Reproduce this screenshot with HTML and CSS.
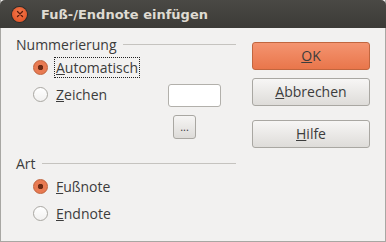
FILE: index.html
```html
<!DOCTYPE html>
<html lang="de">
<head>
<meta charset="UTF-8">
<title>Fuß-/Endnote einfügen</title>
<link rel="stylesheet" href="styles.css">
</head>
<body>
  <!-- Fenster -->
  <div class="fenster">
    <div class="titelleiste">
      <span class="schliessen">
        <svg width="8" height="8" viewBox="0 0 8 8"><path d="M1.5 1.5 L6.5 6.5 M6.5 1.5 L1.5 6.5" stroke="#5a1a0a" stroke-width="1.3" stroke-linecap="round"/></svg>
      </span>
      <span class="titel">Fuß-/Endnote einfügen</span>
    </div>
    <div class="inhalt">
      <div class="links">
        <div class="gruppe-titel">Nummerierung<span class="linie"></span></div>
        <div class="zeile">
          <span class="radio an"></span>
          <span class="fokus"><u>A</u>utomatisch</span>
        </div>
        <div class="zeile">
          <span class="radio"></span>
          <span class="label"><u>Z</u>eichen</span>
          <span class="eingabe"></span>
        </div>
        <div class="zeile-knopf">
          <span class="klein-knopf">...</span>
        </div>
        <div class="gruppe-titel art">Art<span class="linie"></span></div>
        <div class="zeile">
          <span class="radio an"></span>
          <span class="label"><u>F</u>ußnote</span>
        </div>
        <div class="zeile">
          <span class="radio"></span>
          <span class="label"><u>E</u>ndnote</span>
        </div>
      </div>
      <div class="rechts">
        <div class="knopf ok"><u>O</u>K</div>
        <div class="knopf"><u>A</u>bbrechen</div>
        <div class="knopf hilfe"><u>H</u>ilfe</div>
      </div>
    </div>
  </div>
</body>
</html>
```

FILE: styles.css
```css
body {
  margin: 0;
  padding: 0;
  background: #f2f1f0;
  font-family: "Open Sans", "DejaVu Sans", sans-serif;
  font-size: 14px;
  color: #3c3c3c;
}
.fenster {
  width: 386px;
  height: 242px;
  box-sizing: border-box;
  border: 1px solid #a8a7a3;
  border-top: none;
  background: #f2f1f0;
  display: flex;
  flex-direction: column;
}
.titelleiste {
  height: 28px;
  margin: 0 -1px;
  background: linear-gradient(#4a4945, #3c3b37);
  border-radius: 5px 5px 0 0;
  display: flex;
  align-items: center;
  padding-left: 12px;
}
.schliessen {
  width: 15px;
  height: 15px;
  border-radius: 50%;
  background: radial-gradient(circle at 50% 40%, #f47b4f, #df4a1c);
  box-shadow: 0 0 0 1px #2e2d2a;
  display: flex;
  align-items: center;
  justify-content: center;
}
.titel {
  margin-left: 14px;
  font-family: "DejaVu Sans", sans-serif;
  font-weight: bold;
  font-size: 13px;
  color: #dfdbd2;
}
.inhalt {
  flex: 1;
  display: flex;
  padding: 6px 15px 0 15px;
}
.links {
  width: 221px;
}
.gruppe-titel {
  display: flex;
  align-items: center;
  height: 20px;
}
.gruppe-titel .linie {
  flex: 1;
  height: 1px;
  background: #c5c3bf;
  margin-left: 6px;
}
.gruppe-titel.art {
  margin-top: 14px;
}
.zeile {
  display: flex;
  align-items: center;
  height: 27px;
  padding-left: 17px;
}
.radio {
  width: 13px;
  height: 13px;
  border-radius: 50%;
  border: 1px solid #a9a7a2;
  background: linear-gradient(#ffffff, #f2f1f0);
  margin-right: 8px;
  flex: none;
}
.radio.an {
  border-color: #c0613a;
  background: radial-gradient(circle, #6b2a14 0 2.5px, #e87a52 3px);
}
.fokus {
  border: 1px dotted #222;
  padding: 0 1px;
  margin-left: -2px;
  line-height: 19px;
}
.eingabe {
  margin-left: auto;
  margin-right: 15px;
  width: 51px;
  height: 21px;
  margin-top: 1px;
  background: #fff;
  border: 1px solid #b2b0ab;
  border-radius: 3px;
}
.zeile-knopf {
  display: flex;
  padding-left: 157px;
  margin-top: 7px;
}
.klein-knopf {
  width: 21px;
  height: 22px;
  border: 1px solid #a9a7a2;
  border-radius: 3px;
  background: linear-gradient(#f6f5f4, #dddbd8);
  font-size: 11px;
  text-align: center;
  line-height: 22px;
}
.rechts {
  margin-left: 16px;
  padding-top: 8px;
  display: flex;
  flex-direction: column;
}
.knopf {
  width: 116px;
  height: 26px;
  border: 1px solid #a9a7a2;
  border-radius: 3px;
  background: linear-gradient(#f7f6f5, #dedcd9);
  text-align: center;
  line-height: 26px;
  margin-bottom: 8px;
}
.knopf.ok {
  border-color: #c1663f;
  background: linear-gradient(#f49470, #e9764b);
}
.knopf.hilfe {
  margin-top: 6px;
}
```
